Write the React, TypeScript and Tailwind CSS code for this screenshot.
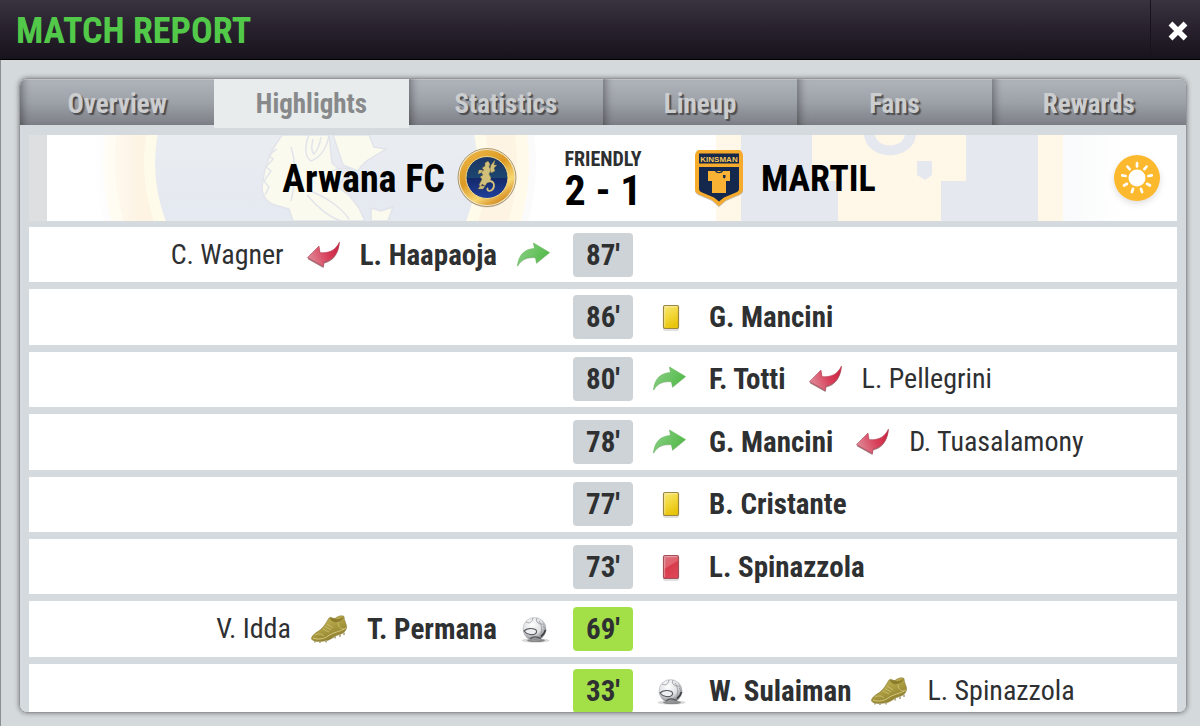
import { useState } from 'react';
import clsx from 'clsx';

type IconName = 'in' | 'out' | 'yellow' | 'red' | 'goal' | 'assist';

interface MatchEvent {
    minute: number;
    side: 'home' | 'away';
    icon: IconName;
    player: string;
    otherIcon?: IconName;
    other?: string;
}

const TABS = ['Overview', 'Highlights', 'Statistics', 'Lineup', 'Fans', 'Rewards'];

const EVENTS: MatchEvent[] = [
    { minute: 87, side: 'home', icon: 'in', player: 'L. Haapaoja', otherIcon: 'out', other: 'C. Wagner' },
    { minute: 86, side: 'away', icon: 'yellow', player: 'G. Mancini' },
    { minute: 80, side: 'away', icon: 'in', player: 'F. Totti', otherIcon: 'out', other: 'L. Pellegrini' },
    { minute: 78, side: 'away', icon: 'in', player: 'G. Mancini', otherIcon: 'out', other: 'D. Tuasalamony' },
    { minute: 77, side: 'away', icon: 'yellow', player: 'B. Cristante' },
    { minute: 73, side: 'away', icon: 'red', player: 'L. Spinazzola' },
    { minute: 69, side: 'home', icon: 'goal', player: 'T. Permana', otherIcon: 'assist', other: 'V. Idda' },
    { minute: 33, side: 'away', icon: 'goal', player: 'W. Sulaiman', otherIcon: 'assist', other: 'L. Spinazzola' },
];

// Gradients shared by all the icons on the page
function Gradients() {
    return (
        <svg width="0" height="0" className="absolute" aria-hidden="true">
            <defs>
                <linearGradient id="g-in" x1="0" y1="0" x2="1" y2="0.4">
                    <stop offset="0" stopColor="#8fd08a" />
                    <stop offset="1" stopColor="#55bb4b" />
                </linearGradient>
                <linearGradient id="g-out" x1="0" y1="0.3" x2="1" y2="0">
                    <stop offset="0" stopColor="#de8090" />
                    <stop offset="0.5" stopColor="#d8405a" />
                    <stop offset="1" stopColor="#c81f3c" />
                </linearGradient>
                <linearGradient id="g-yellow" x1="0" y1="0" x2="0.4" y2="1">
                    <stop offset="0" stopColor="#f7e67a" />
                    <stop offset="0.5" stopColor="#f3d93c" />
                    <stop offset="1" stopColor="#e9c40c" />
                </linearGradient>
                <linearGradient id="g-red" x1="0" y1="0" x2="0.4" y2="1">
                    <stop offset="0" stopColor="#d9707c" />
                    <stop offset="0.5" stopColor="#e0606c" />
                    <stop offset="0.55" stopColor="#d83c4c" />
                    <stop offset="1" stopColor="#dd4455" />
                </linearGradient>
                <radialGradient id="g-ball" cx="0.4" cy="0.3" r="0.7">
                    <stop offset="0" stopColor="#ffffff" />
                    <stop offset="0.6" stopColor="#dfe0e3" />
                    <stop offset="1" stopColor="#7c7e82" />
                </radialGradient>
                <linearGradient id="g-boot" x1="0.2" y1="0" x2="0.8" y2="1">
                    <stop offset="0" stopColor="#c9b95c" />
                    <stop offset="0.5" stopColor="#a99a3f" />
                    <stop offset="1" stopColor="#857526" />
                </linearGradient>
                <linearGradient id="g-gold" x1="0" y1="0" x2="0.6" y2="1">
                    <stop offset="0" stopColor="#efb94a" />
                    <stop offset="0.5" stopColor="#dc9a24" />
                    <stop offset="0.8" stopColor="#f8d873" />
                    <stop offset="1" stopColor="#d8942a" />
                </linearGradient>
                <linearGradient id="g-navy" x1="0" y1="0" x2="0" y2="1">
                    <stop offset="0" stopColor="#1d3565" />
                    <stop offset="0.5" stopColor="#1c4670" />
                    <stop offset="0.52" stopColor="#14296a" />
                    <stop offset="1" stopColor="#20409c" />
                </linearGradient>
            </defs>
        </svg>
    );
}

function EventIcon({ name }: { name: IconName }) {
    return (
        <svg viewBox="0 0 36 36" className="h-9 w-9 shrink-0" aria-hidden="true">
            {name === 'in' && (
                <g>
                    <path d="M0.500 30C1.500 19 7.500 13 17.500 12L16.500 6.500L32.500 16L19.500 27L18.500 21.500C10.500 20.500 4.500 23 0.500 30Z" fill="#8f9a8e" opacity="0.5" />
                    <path d="M0.500 29C1.500 18 7.500 12 17.500 11.500L16.500 6L32.500 15.500L19.500 26L18.500 20.500C10.500 19.500 4.500 22 0.500 29Z" fill="url(#g-in)" stroke="#63b85a" strokeWidth="0.6" />
                </g>
            )}
            {name === 'out' && (
                <g>
                    <path d="M35.500 6C34.500 18 28.500 24.500 20 26.500L19.500 31L3.500 22L15 10.500L16 17C24.500 18 31.500 15 35.500 6Z" fill="#8b5a62" opacity="0.8" />
                    <path d="M35.500 5C34.500 17 28.500 23.500 20 25L19.500 29.500L3.500 20.500L15 9L16 15.500C24.500 16.500 31.500 13.500 35.500 5Z" fill="url(#g-out)" stroke="#b64a5d" strokeWidth="0.6" />
                </g>
            )}
            {(name === 'yellow' || name === 'red') && (
                <g>
                    <rect x="10" y="8" width="16" height="24" rx="2" fill="#000" opacity="0.12" />
                    <rect
                        x="10.500"
                        y="6.500"
                        width="15"
                        height="23"
                        rx="1.500"
                        fill={name === 'yellow' ? 'url(#g-yellow)' : 'url(#g-red)'}
                        stroke={name === 'yellow' ? '#9a8640' : '#a2505a'}
                        strokeWidth="1.200"
                    />
                    <path d="M11.700 28V7.700H24.300" fill="none" stroke="#fff" strokeWidth="0.8" opacity="0.5" />
                </g>
            )}
            {name === 'goal' && (
                <g>
                    <ellipse cx="18.500" cy="29.500" rx="14" ry="2.200" fill="#000" opacity="0.15" />
                    <ellipse cx="19" cy="29.500" rx="9" ry="1.600" fill="#333" opacity="0.5" />
                    <circle cx="17.500" cy="18" r="11.500" fill="url(#g-ball)" stroke="#b4b6ba" strokeWidth="0.6" />
                    <path d="M9 11C13 13 15 11 16 7M20 7C18 11 22 14 27 13M22 10C25 14 25 19 24 23M26 15C28 17 29 19 29 20" fill="none" stroke="#9a9ca1" strokeWidth="0.9" />
                    <path d="M7 20C10 17 15 17 18.500 18.500C21.500 21 18 24.500 13 23.500C10.500 23 8.500 22 7 20Z" fill="#eeeff1" stroke="#5c5e63" strokeWidth="1.200" />
                    <path d="M13 28C16 25 20 25.500 24 27.500" fill="none" stroke="#54565a" strokeWidth="1.200" />
                    <path d="M24 25.500C26 24 28 21 28.500 19" fill="none" stroke="#3c3e42" strokeWidth="1.600" />
                </g>
            )}
            {name === 'assist' && (
                <g>
                    <path d="M0.500 28C0.500 24 5 22 9 19C13 16 15 12 18 7C20 5 22 8 24 7.500C27 5 31 4 33 5.500C33 10 36 13 35.500 17C34 22 30 23 27 24C23 25 19 30 13 30C8 31 2 30.500 0.500 28Z" fill="url(#g-boot)" stroke="#8a7c38" strokeWidth="0.6" />
                    <path d="M2 27C7 29 13 28 17 25C22 21 29 21 35 17" fill="none" stroke="#d9cd84" strokeWidth="0.9" />
                    <path d="M24 7.500C26 9 30 8 33 5.500C32 9 27 12 23 11C20 10 19 8 18.500 7Z" fill="#8b7d2c" />
                    <path d="M12 18L18 21M14 15.500L20 19M16 13L22 17M4 24C8 22 11 23 13 25M27 11C27 15 29 18 33 18" fill="none" stroke="#d6ca82" strokeWidth="0.7" />
                    <path d="M4 30V31.500M9 30V32M15 29V31.500M24 25V27.500M29 23.500V26M33 21.500V24" stroke="#aca27a" strokeWidth="1.600" />
                </g>
            )}
        </svg>
    );
}

function HomeCrest() {
    return (
        <svg viewBox="0 0 60 60" className="h-15 w-15 shrink-0" role="img" aria-label="Arwana FC crest">
            <circle cx="30" cy="30.500" r="29" fill="#000" opacity="0.15" />
            <circle cx="30" cy="29.500" r="29" fill="#f3e6c4" stroke="#9a8458" strokeWidth="0.8" />
            <circle cx="30" cy="29.500" r="27.500" fill="url(#g-gold)" />
            <circle cx="30" cy="29.500" r="21" fill="url(#g-navy)" stroke="#f3d98a" strokeWidth="1" />
            <g fill="#d2c07a" stroke="#7c6c3a" strokeWidth="0.4">
                <path d="M28 15L31 13L33 16L32 19L34 22L32 26L34 30L33 34L30 35L28 38L25 36L24 39L22 37L25 31L23 29L26 27L24 24L27 22L25 20L28 18Z" />
                <path d="M34 17L38 12L37 17L40 17L37 20L38 23L34 25L33 21Z" />
                <path d="M22 22L26 22L24 25L21 26ZM23 38L21 41L26 41L28 38Z" />
            </g>
            <path d="M32 33C38 33 38 39 35 42C32 44 29 42 31 40" fill="none" stroke="#d2c07a" strokeWidth="1.800" />
        </svg>
    );
}

function AwayCrest() {
    return (
        <svg viewBox="0 0 60 60" className="h-15 w-15 shrink-0" role="img" aria-label="MARTIL crest">
            <path d="M9 3H51Q54 5 54 8V43Q54 45 51 47L37 53L30 59L23 53L9 47Q6 45 6 43V8Q6 5 9 3Z" fill="#6b5a3c" opacity="0.4" />
            <path d="M9 2H51Q54 4 54 7V42Q54 44 51 46L37 52L30 58L23 52L9 46Q6 44 6 42V7Q6 4 9 2Z" fill="#f6ab2d" />
            <path d="M10 5.500H50V15.500H10Z" fill="#16294a" />
            <path d="M10 19H50V41Q50 43 48 44L35 49.500L30 53.500L25 49.500L12 44Q10 43 10 41Z" fill="#13284c" />
            <text x="30" y="13.500" textAnchor="middle" fontSize="8" fontWeight="700" fontFamily="Liberation Sans" fill="#f6c65a">
                KINSMAN
            </text>
            <path d="M19 23H26C27 26 33 26 34 23H41V33H37V45H23V33H19Z" fill="#f9b233" />
            <path d="M27.500 23C28.500 24.500 31.500 24.500 32.500 23Z" fill="#f9b233" />
            <path d="M34 27H36.500V29.500L35.300 30.500L34 29.500Z" fill="#13284c" />
        </svg>
    );
}

function SunIcon() {
    return (
        <svg viewBox="0 0 48 48" className="h-12 w-12 drop-shadow-md" role="img" aria-label="Sunny">
            <circle cx="24" cy="24" r="23" fill="#fdb92e" />
            <circle cx="24" cy="24" r="8.500" fill="#fff" />
            <g stroke="#fff" strokeWidth="2.600" strokeLinecap="round">
                {[0, 40, 80, 120, 160, 200, 240, 280, 320].map((angle) => (
                    <path key={angle} d="M24 9V12.500" transform={`rotate(${angle} 24 24)`} />
                ))}
            </g>
        </svg>
    );
}

// Oversized, washed out crests behind the score line
function ScoreBackdrop() {
    return (
        <svg viewBox="0 0 1148 86" preserveAspectRatio="xMidYMid slice" className="absolute inset-0 h-full w-full" aria-hidden="true">
            <defs>
                <linearGradient id="fade-left" x1="0" y1="0" x2="1" y2="0">
                    <stop offset="0" stopColor="#fff" />
                    <stop offset="0.4" stopColor="#fff" />
                    <stop offset="1" stopColor="#fff" stopOpacity="0" />
                </linearGradient>
                <linearGradient id="fade-right" x1="0" y1="0" x2="1" y2="0">
                    <stop offset="0" stopColor="#f9fafb" />
                    <stop offset="1" stopColor="#fff" />
                </linearGradient>
                <linearGradient id="field-home" x1="0" y1="0" x2="0" y2="1">
                    <stop offset="0.3" stopColor="#ecf0f4" />
                    <stop offset="0.6" stopColor="#e6eaf0" />
                    <stop offset="0.85" stopColor="#e3e7f3" />
                </linearGradient>
            </defs>
            <circle cx="287" cy="28" r="220" fill="#fbfbfc" />
            <circle cx="287" cy="28" r="213" fill="#fffaea" />
            <circle cx="287" cy="28" r="201" fill="#fdf4e4" />
            <circle cx="287" cy="28" r="172" fill="#fffbea" />
            <circle cx="287" cy="28" r="161" fill="url(#field-home)" />
            <g fill="#fbfaef" stroke="#e1e4ea" strokeWidth="1.500">
                <path d="M253 0C244 12 236 28 234 45C231 58 235 66 246 70L260 74L264 86H336L330 73L320 60L308 52L316 40L303 28L300 0Z" />
                <path d="M304 0H340L345 12L357 14C345 22 334 26 329 36L314 30Z" />
                <path d="M342 73L352 76L364 72L359 86H342Z" />
            </g>
            <g fill="none" stroke="#e1e4ea" strokeWidth="1.500">
                <path d="M280 0C275 12 276 22 282 26C292 22 298 12 300 0M284 4C282 12 283 17 285 19C289 15 291 8 292 2" />
                <path d="M262 66C266 50 268 30 262 12M280 56C294 60 312 72 320 84M278 60C288 72 300 82 312 86M300 40C304 34 312 32 322 34" />
                <path d="M248 14L240 20L244 24L237 32L242 36L235 46L240 52L236 60" />
            </g>
            <rect x="687" width="347" height="86" fill="#fff7e8" />
            <rect x="712" width="297" height="86" fill="#e5e9ef" />
            <path d="M783 0H937V46H912V86H809V46H783Z" fill="#fff7e8" />
            <path d="M835 0C838 27 884 27 887 0H876C873 14 849 14 846 0Z" fill="#e5e9ef" />
            <path d="M888 26H903V40L896 45L888 40Z" fill="#e5e9ef" />
            <rect x="1034" width="60" height="86" fill="url(#fade-right)" />
            <rect x="18" width="90" height="86" fill="url(#fade-left)" />
            <rect width="18" height="86" fill="#dedfe1" />
        </svg>
    );
}

function ScoreHeader() {
    return (
        <div className="relative h-[86px] overflow-hidden bg-white">
            <ScoreBackdrop />
            <div className="relative grid h-full grid-cols-[1fr_172px_1fr] items-center text-black">
                <div className="flex items-center justify-end gap-3">
                    <h2 className="pt-0.5 text-[38px] leading-10 font-bold">Arwana FC</h2>
                    <HomeCrest />
                </div>
                <div className="flex flex-col items-center pt-0.5">
                    <span className="text-xl leading-6 font-bold text-[#2d2f31]">FRIENDLY</span>
                    <span className="text-[42px] leading-10 font-bold">2 - 1</span>
                </div>
                <div className="flex items-center gap-3 pr-4">
                    <AwayCrest />
                    <h2 className="pt-0.5 text-4xl leading-10 font-bold">MARTIL</h2>
                    <div className="ml-auto">
                        <SunIcon />
                    </div>
                </div>
            </div>
        </div>
    );
}

function EventSide({ event }: { event: MatchEvent }) {
    return (
        <div className={clsx('flex items-center gap-5 px-5', event.side === 'home' && 'flex-row-reverse')}>
            <EventIcon name={event.icon} />
            <span className="font-bold">{event.player}</span>
            {event.otherIcon && <EventIcon name={event.otherIcon} />}
            {event.other && <span className="text-[28px]">{event.other}</span>}
        </div>
    );
}

function EventRow({ event }: { event: MatchEvent }) {
    const isGoal = event.icon === 'goal';

    return (
        <li className="grid grid-cols-[1fr_60px_1fr] items-center bg-white">
            {event.side === 'home' ? <EventSide event={event} /> : <div />}
            <time
                className={clsx(
                    'flex h-11 items-center justify-center rounded-sm font-bold',
                    isGoal ? 'bg-[#a3e048]' : 'bg-[#cdd3d6]'
                )}
            >
                {event.minute}'
            </time>
            {event.side === 'away' ? <EventSide event={event} /> : <div />}
        </li>
    );
}

export default function App() {
    const [activeTab, setActiveTab] = useState('Highlights');

    return (
        <div className="flex h-screen flex-col overflow-hidden bg-[#d4d9dc] font-['Roboto_Condensed','Liberation_Sans_Narrow','Liberation_Sans',sans-serif]">
            <Gradients />

            {/* Title bar */}
            <header className="flex h-[60px] shrink-0 items-stretch justify-between border-b border-black bg-linear-to-b from-[#38333f] via-[#28212d] to-[#17131c]">
                <h1 className="flex items-center pt-[3px] pl-4 text-4xl font-bold text-[#52c949]">MATCH REPORT</h1>
                <button aria-label="Close" className="flex w-[50px] items-center justify-center border-l border-[#17131c] pt-[3px] pl-1">
                    <svg viewBox="0 0 22 22" className="h-[22px] w-[22px]">
                        <path d="M3.500 3.500L18.500 18.500M18.500 3.500L3.500 18.500" stroke="#fff" strokeWidth="5.500" />
                    </svg>
                </button>
            </header>

            <main className="flex min-h-0 flex-1 flex-col border-l border-[#8b8e93] pt-[18px] pr-[13px] pb-[13px] pl-[18px]">
                <div className="flex min-h-0 flex-1 flex-col overflow-hidden rounded-lg border border-[#94989c] shadow-[0_0_5px_rgba(0,0,0,0.45)]">
                    {/* Tabs */}
                    <nav className="grid shrink-0 grid-cols-6 grid-rows-[46px]">
                        {TABS.map((tab) => (
                            <button
                                key={tab}
                                onClick={() => setActiveTab(tab)}
                                className={clsx(
                                    'pt-[3px] text-[27px] leading-8 font-bold',
                                    tab === activeTab
                                        ? 'z-10 h-[49px] bg-[#e8ecec] pb-[3px] text-[#87898b]'
                                        : 'bg-linear-to-b from-[#b0b4bb] via-[#9da1a8] to-[#7d8086] text-[#cbcdcf] shadow-[inset_8px_0_8px_-6px_rgba(0,0,0,0.4),inset_0_1px_0_#c4c8cc] [text-shadow:2px_2px_1px_#4b4d51]'
                                )}
                            >
                                {tab}
                            </button>
                        ))}
                    </nav>

                    {/* Highlights */}
                    <div className="flex min-h-0 flex-1 flex-col gap-[6px] overflow-hidden bg-[#d4dadd] px-[9px] pt-[10px]">
                        <div className="shrink-0">
                            <ScoreHeader />
                        </div>
                        <ol className="grid h-[492px] shrink-0 auto-rows-fr gap-[7px] text-[29px] leading-8 text-[#2e3032]">
                            {EVENTS.map((event) => (
                                <EventRow key={event.minute} event={event} />
                            ))}
                        </ol>
                    </div>
                </div>
            </main>
        </div>
    );
}
